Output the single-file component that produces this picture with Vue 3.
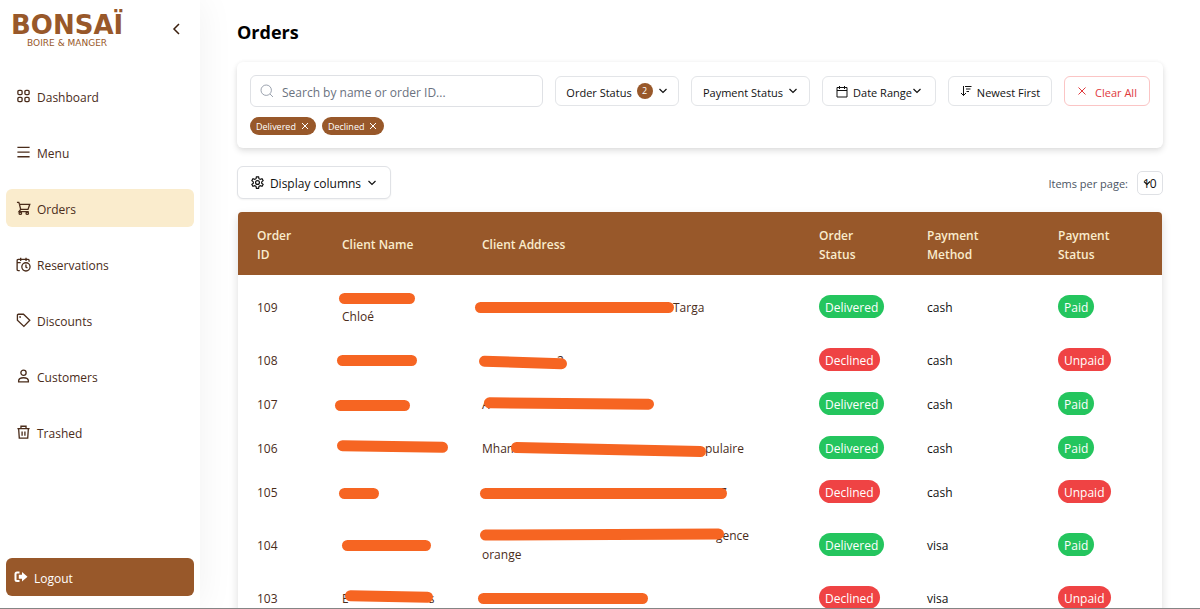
<script setup>
import { ref } from 'vue'

const navItems = [
  { label: 'Dashboard', icon: 'grid' },
  { label: 'Menu', icon: 'menu' },
  { label: 'Orders', icon: 'cart', active: true },
  { label: 'Reservations', icon: 'reservation' },
  { label: 'Discounts', icon: 'tag' },
  { label: 'Customers', icon: 'user' },
  { label: 'Trashed', icon: 'trash' },
]

const search = ref('')
const perPage = ref('10')
const chips = ['Delivered', 'Declined']
const headings = ['Order ID', 'Client Name', 'Client Address', 'Order Status', 'Payment Method', 'Payment Status']

// Private parts of a cell are blank runs (numbers, in px) under a marker stroke.
// A stroke is [left, centre y, width, tilt in degrees] inside the cell.
const orders = [
  { id: 109, name: [[70], ['Chloé']], nameBar: [-3, 11, 76, 0], address: [[191, 'Targa']], addressBar: [-7, 10, 199, 0], status: 'Delivered', method: 'cash', payment: 'Paid' },
  { id: 108, name: [[70]], nameBar: [-5, 10, 80, 0], address: [[75, '2']], addressBar: [-3, 12, 88, 2], status: 'Declined', method: 'cash', payment: 'Unpaid' },
  { id: 107, name: [[70]], nameBar: [-7, 11, 75, 0], address: [['A', 160]], addressBar: [2, 9, 170, 0.5], status: 'Delivered', method: 'cash', payment: 'Paid' },
  { id: 106, name: [[100]], nameBar: [-5, 8, 111, 1], address: [['Mham', 187, 'pulaire']], addressBar: [29, 11, 195, 1.2], status: 'Delivered', method: 'cash', payment: 'Paid' },
  { id: 105, name: [[35]], nameBar: [-3, 11, 40, 0], address: [[238, '7']], addressBar: [-2, 11, 247, 0], status: 'Declined', method: 'cash', payment: 'Unpaid' },
  { id: 104, name: [[80]], nameBar: [0, 10, 89, 0], address: [[234, 'gence'], ['orange']], addressBar: [-2, 9, 244, -0.3], status: 'Delivered', method: 'visa', payment: 'Paid' },
  { id: 103, name: [['E', 80, 's']], nameBar: [3, 8, 88, 1], address: [[160]], addressBar: [-4, 10, 170, 0], status: 'Declined', method: 'visa', payment: 'Unpaid' },
]

const barStyle = ([x, y, w, tilt]) => ({
  left: `${x}px`,
  top: `${y - 6}px`,
  width: `${w}px`,
  transform: `rotate(${tilt}deg)`,
})
</script>

<template>
  <div class="app">
    <aside class="sidebar">
      <div class="brand">
        <div class="logo">
          <span class="logo-name">BONSAÏ</span>
          <span class="logo-tag">BOIRE &amp; MANGER</span>
        </div>
        <button class="collapse" type="button" aria-label="Collapse sidebar">
          <svg width="16" height="16" viewBox="0 0 16 16"><path d="M10 3 5 8l5 5" /></svg>
        </button>
      </div>

      <nav class="nav">
        <a v-for="item in navItems" :key="item.label" href="#" class="nav-link" :class="{ active: item.active }">
          <svg class="nav-icon" viewBox="0 0 16 16" aria-hidden="true">
            <g v-if="item.icon === 'grid'">
              <rect x="2" y="1.500" width="4.500" height="4.500" rx="1.200" /><rect x="9.500" y="1.500" width="4.500" height="4.500" rx="1.200" />
              <rect x="2" y="9" width="4.500" height="4.500" rx="1.200" /><rect x="9.500" y="9" width="4.500" height="4.500" rx="1.200" />
            </g>
            <path v-else-if="item.icon === 'menu'" d="M1.500 2.500h13M1.500 7.500h13M1.500 12.500h13" />
            <g v-else-if="item.icon === 'cart'">
              <path d="M1 1.500h2l.7 2M3.700 3.500h11L12.800 9H5L3.700 3.500M5 9l-1.800 2.300h10.300" />
              <circle cx="4.600" cy="13" r="1.300" /><circle cx="12" cy="13" r="1.300" />
            </g>
            <g v-else-if="item.icon === 'reservation'">
              <path d="M4 14.500H2.300Q1.200 14.500 1.200 13.400V3.600Q1.200 2.500 2.300 2.500H13Q14 2.500 14 3.600V5M5 .8v3.400M10.700 .8v3.400M1.200 6H5" />
              <circle cx="10.600" cy="10.500" r="4.400" /><path d="M10.600 8v2.700l1.600 1" />
            </g>
            <g v-else-if="item.icon === 'tag'">
              <path d="M1.500 2.300Q1.500 1.300 2.500 1.300H8l6.700 6.500L8.400 14.300 1.500 7.800Z" /><circle cx="4.400" cy="4.200" r=".3" />
            </g>
            <g v-else-if="item.icon === 'user'">
              <circle cx="8" cy="4" r="2.800" /><path d="M2.800 13.800v-1.200Q3 9.300 8 9.300t5.200 3.300v1.200Z" />
            </g>
            <g v-else>
              <path d="M1.500 3.800h13M5.300 3.800V1.300h5.400v2.500M2.800 3.800l.7 10.200h9l.7-10.200M6.500 6.800v4.700M9.500 6.800v4.700" />
            </g>
          </svg>
          <span class="text">{{ item.label }}</span>
        </a>
      </nav>

      <button class="logout" type="button">
        <svg width="14" height="14" viewBox="0 0 14 14" aria-hidden="true">
          <path class="logout-door" d="M5.500 2.500H3Q1.500 2.500 1.500 4v5.500Q1.500 11 3 11h2.500" />
          <path class="logout-arrow" d="M8 2v2.800H4.800v3.900H8v2.800l5.500-4.750Z" />
        </svg>
        <span class="text">Logout</span>
      </button>
    </aside>

    <main class="main">
      <h1 class="title">Orders</h1>

      <section class="filters" aria-label="Filters">
        <div class="filter-row">
          <label class="search">
            <svg width="14" height="14" viewBox="0 0 14 14" aria-hidden="true"><circle cx="6.200" cy="6.200" r="5.200" /><path d="m10 10 3 3" /></svg>
            <input v-model="search" class="text" type="text" placeholder="Search by name or order ID..." aria-label="Search by name or order ID" />
          </label>
          <button class="filter order-status" type="button">
            <span class="text">Order Status</span> <span class="count">2</span>
            <svg class="chevron" viewBox="0 0 10 10"><path d="M1.500 3 5 6.500 8.500 3" /></svg>
          </button>
          <button class="filter payment-status" type="button">
            <span class="text">Payment Status</span>
            <svg class="chevron" viewBox="0 0 10 10"><path d="M1.500 3 5 6.500 8.500 3" /></svg>
          </button>
          <button class="filter date-range" type="button">
            <svg width="12" height="13" viewBox="0 0 12 13"><path d="M1 2.500h10v9.500H1ZM1 5.500h10M3.500 1v3M8.500 1v3" /></svg>
            <span class="date-label"><span class="text">Date Range</span><svg class="chevron" viewBox="0 0 10 10"><path d="M1.500 3 5 6.500 8.500 3" /></svg></span>
          </button>
          <button class="filter newest" type="button">
            <svg width="12" height="12" viewBox="0 0 12 12"><path d="M3.500 1v9.500M1 8l2.500 2.500L6 8M5 1.500h6.500M6 4h4.500M6.500 6.500h2.500" /></svg>
            <span class="text">Newest First</span>
          </button>
          <button class="filter clear" type="button">
            <svg width="10" height="10" viewBox="0 0 10 10"><path d="m1.500 1.500 7 7m0-7-7 7" /></svg>
            <span class="text">Clear All</span>
          </button>
        </div>
        <div class="chips">
          <button v-for="chip in chips" :key="chip" class="chip" type="button">
            {{ chip }}
            <svg width="8" height="8" viewBox="0 0 8 8" aria-hidden="true"><path d="m1 1 6 6m0-6-6 6" /></svg>
          </button>
        </div>
      </section>

      <div class="toolbar">
        <button class="columns" type="button">
          <svg width="13" height="13" viewBox="0 0 24 24" aria-hidden="true">
            <path d="M10 1.500h4l.7 3.500 2.300 1.300 3.400-1.200 2 3.500-2.700 2.300v2.400l2.700 2.300-2 3.500-3.400-1.200-2.300 1.300-.7 3.500h-4l-.7-3.500L7 17.900l-3.400 1.200-2-3.500 2.700-2.300v-2.400L1.600 8.600l2-3.500L7 6.300 9.300 5Z" />
            <circle cx="12" cy="12" r="3.600" />
          </svg>
          <span class="text">Display columns</span>
          <svg class="chevron" viewBox="0 0 10 10"><path d="M1.500 3 5 6.500 8.500 3" /></svg>
        </button>
        <div class="per-page">
          <label class="text" for="per-page">Items per page:</label>
          <span class="select-wrap">
            <select id="per-page" v-model="perPage">
              <option>10</option>
              <option>20</option>
              <option>50</option>
            </select>
            <svg class="select-arrow" viewBox="0 0 10 10"><path d="M2 3.500 5 6.500 8 3.500" /></svg>
          </span>
        </div>
      </div>

      <div class="table-card">
        <table>
          <colgroup>
            <col class="c-id" /><col class="c-name" /><col /><col class="c-status" /><col class="c-method" /><col class="c-payment" />
          </colgroup>
          <thead>
            <tr>
              <th v-for="h in headings" :key="h" scope="col">{{ h }}</th>
            </tr>
          </thead>
          <tbody>
            <tr v-for="o in orders" :key="o.id">
              <td>{{ o.id }}</td>
              <td v-for="field in ['name', 'address']" :key="field">
                <div class="private">
                  <div v-for="(line, i) in o[field]" :key="i" class="line">
                    <template v-for="(part, j) in line" :key="j">
                      <span v-if="typeof part === 'number'" class="blank" :style="{ width: part + 'px' }"></span>
                      <span v-else>{{ part }}</span>
                    </template>
                  </div>
                  <span class="stroke" :style="barStyle(o[field + 'Bar'])"></span>
                </div>
              </td>
              <td class="status"><span class="badge" :class="o.status.toLowerCase()">{{ o.status }}</span></td>
              <td class="method">{{ o.method }}</td>
              <td class="status"><span class="badge" :class="o.payment.toLowerCase()">{{ o.payment }}</span></td>
            </tr>
          </tbody>
        </table>
      </div>
    </main>
  </div>
</template>

<style>
body {
  margin: 0;
}
</style>

<style scoped>
* {
  box-sizing: border-box;
}
.app {
  display: flex;
  height: 100vh;
  overflow: hidden;
  border-bottom: 1px solid #858585;
  background: #fff;
  color: #111;
  font: 12px/19px "Open Sans", "Noto Sans", sans-serif;
}
button,
input,
select {
  font: inherit;
  color: inherit;
}
button {
  display: flex;
  align-items: center;
  white-space: nowrap;
  cursor: pointer;
}
svg {
  flex: none;
  fill: none;
  stroke: currentColor;
}
.text {
  padding: 2px 0 0;
}
.sidebar {
  display: flex;
  flex-direction: column;
  flex: none;
  width: 200px;
  padding: 0 6px 12px;
  box-shadow: 0 0 36px rgba(0, 0, 0, 0.06);
}
.brand {
  display: flex;
  justify-content: space-between;
  align-items: flex-start;
  height: 77px;
  padding: 12px 9px 0 5px;
}
.logo {
  display: flex;
  flex-direction: column;
  align-items: center;
  color: #98582a;
  font-family: "DejaVu Sans", sans-serif;
}
.logo-name {
  font-size: 26px;
  line-height: 26px;
  font-weight: 700;
}
.logo-tag {
  font-size: 9px;
  line-height: 11px;
}
.collapse {
  margin-top: 9px;
  padding: 0;
  border: 0;
  background: none;
  color: #3b1f0d;
}
.collapse svg {
  stroke-width: 1.5;
}
.nav {
  display: flex;
  flex-direction: column;
  gap: 18px;
}
.nav-link {
  display: flex;
  align-items: center;
  gap: 6px;
  height: 38px;
  padding: 0 10px;
  border-radius: 6px;
  color: #4a2c1a;
  text-decoration: none;
}
.nav-link.active {
  background: #faeccd;
}
.nav-icon {
  width: 15px;
  height: 15px;
  stroke-width: 1.4;
}
.logout {
  gap: 6px;
  height: 38px;
  margin-top: auto;
  padding: 0 8px;
  border: 0;
  border-radius: 6px;
  background: #98582a;
  color: #fff;
}
.logout-door {
  stroke-width: 2;
}
.logout-arrow {
  fill: currentColor;
  stroke: none;
}
.main {
  flex: 1;
  min-width: 0;
  padding: 20px 37px 0;
}
.title {
  margin: 0 0 17px;
  font-size: 18px;
  line-height: 25px;
  font-weight: 700;
  color: #000;
}
.filters {
  padding: 13px;
  border-radius: 6px;
  background: #fff;
  box-shadow: 0 3px 6px rgba(0, 0, 0, 0.12), 0 0 4px rgba(0, 0, 0, 0.04);
}
.filter-row {
  display: flex;
  align-items: center;
  gap: 12px;
}
.search {
  display: flex;
  align-items: center;
  flex: 1;
  min-width: 0;
  gap: 8px;
  height: 32px;
  padding: 0 9px;
  border: 1px solid #dfe1e5;
  border-radius: 6px;
}
.search svg {
  stroke: #9ca3af;
}
.search input {
  flex: 1;
  min-width: 0;
  border: 0;
  outline: 0;
  background: none;
}
.search input::placeholder {
  color: #6b7280;
  opacity: 1;
}
.filter {
  justify-content: center;
  gap: 5px;
  height: 30px;
  padding: 0;
  border: 1px solid #e3e5e8;
  border-radius: 6px;
  background: #fff;
  font-size: 11px;
}
.order-status { width: 124px; }
.payment-status { width: 119px; }
.date-range { width: 114px; }
.newest { width: 104px; }
.clear {
  width: 86px;
  gap: 8px;
  border-color: #fbc5c5;
  color: #e0393c;
}
.date-label {
  display: flex;
  align-items: center;
}
.chevron {
  width: 10px;
  height: 10px;
  stroke-width: 1.2;
}
.count {
  width: 16px;
  border-radius: 8px;
  background: #98582a;
  color: #fff;
  font-size: 9px;
  line-height: 16px;
  text-align: center;
}
.chips {
  display: flex;
  gap: 6px;
  margin-top: 10px;
}
.chip {
  gap: 5px;
  height: 18px;
  padding: 0 7px 0 6px;
  border: 0;
  border-radius: 9px;
  background: #98582a;
  color: #fff;
  font-size: 9px;
}
.toolbar {
  display: flex;
  align-items: center;
  justify-content: space-between;
  margin: 18px 0 13px;
}
.columns {
  justify-content: center;
  gap: 6px;
  width: 154px;
  height: 33px;
  padding: 0;
  border: 1px solid #e0e2e6;
  border-radius: 6px;
  background: #fff;
  box-shadow: 0 1px 2px rgba(0, 0, 0, 0.05);
}
.columns svg:first-child {
  stroke-width: 2.2;
}
.per-page {
  display: flex;
  align-items: center;
  gap: 9px;
  color: #4b5563;
  font-size: 11px;
}
.select-wrap {
  position: relative;
  display: flex;
}
select {
  width: 26px;
  height: 24px;
  padding: 1px 0 0 5px;
  border: 1px solid #dfe1e5;
  border-radius: 5px;
  background: #fff;
  appearance: none;
  color: #111;
  font-size: 12px;
}
.select-arrow {
  position: absolute;
  top: 7px;
  left: 5px;
  width: 10px;
  height: 10px;
  stroke: #111;
  stroke-width: 1.2;
  pointer-events: none;
}
.table-card {
  margin: 0 1px;
  overflow: hidden;
  border-radius: 4px 4px 0 0;
  box-shadow: 0 4px 10px rgba(0, 0, 0, 0.14);
}
table {
  width: 100%;
  border-collapse: collapse;
  table-layout: fixed;
}
.c-id { width: 85px; }
.c-name { width: 140px; }
.c-status { width: 108px; }
.c-method { width: 131px; }
.c-payment { width: 123px; }
th {
  height: 63px;
  padding: 2px 30px 0 19px;
  background: #98582a;
  color: #faeccd;
  font-weight: 600;
  text-align: left;
}
td {
  height: 44px;
  padding: 13px 0 11px 19px;
  color: #4a2c1a;
}
.status {
  padding: 0 0 0 19px;
}
.method {
  color: #111;
}
.private {
  position: relative;
}
.line {
  display: flex;
  min-height: 19px;
}
.stroke {
  position: absolute;
  height: 11px;
  border-radius: 6px;
  background: #f66522;
}
.badge {
  display: inline-block;
  padding: 3px 6px 1px;
  border-radius: 12px;
  color: #fff;
  vertical-align: middle;
}
.delivered,
.paid {
  background: #24c55e;
}
.declined,
.unpaid {
  background: #ef4344;
}
</style>
